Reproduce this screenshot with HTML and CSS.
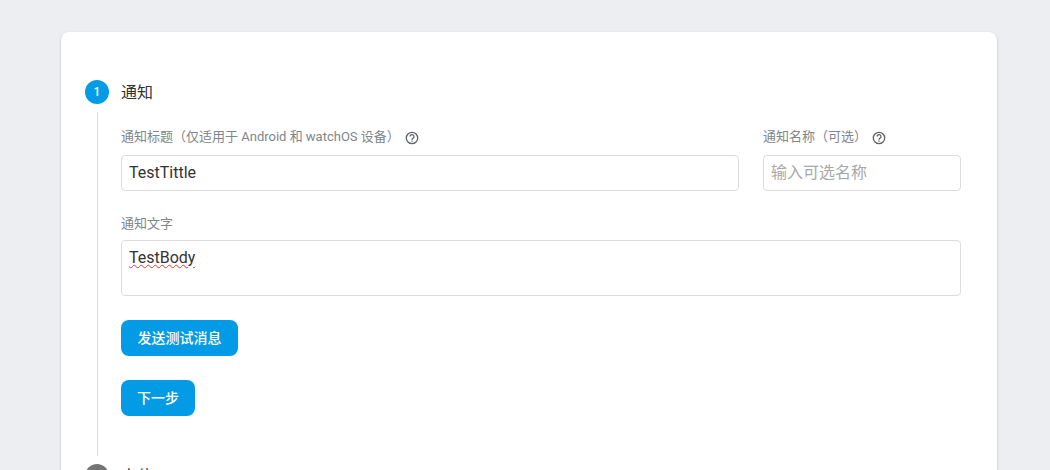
FILE: index.html
```html
<!DOCTYPE html>
<html lang="zh-CN">
<head>
<meta charset="utf-8">
<title>通知</title>
<link rel="stylesheet" href="styles.css">
</head>
<body>
<main class="card">
  <section class="step">
    <header class="step-head">
      <span class="badge">1</span>
      <h2 class="step-title">通知</h2>
    </header>
    <div class="step-body">
      <div class="row">
        <div class="field grow">
          <label class="label"><span class="label-text">通知标题（仅适用于 Android 和 watchOS 设备）</span><svg class="help" viewBox="0 0 14 14"><circle cx="7" cy="7" r="5.7"/><path d="M5 5.6a2 2 0 1 1 3 1.7c-.7.4-1 .7-1 1.4"/><path d="M7 9.6v1.2"/></svg></label>
          <div class="input value">TestTittle</div>
        </div>
        <div class="field side">
          <label class="label"><span class="label-text">通知名称（可选）</span><svg class="help" viewBox="0 0 14 14"><circle cx="7" cy="7" r="5.7"/><path d="M5 5.6a2 2 0 1 1 3 1.7c-.7.4-1 .7-1 1.4"/><path d="M7 9.6v1.2"/></svg></label>
          <div class="input placeholder">输入可选名称</div>
        </div>
      </div>
      <div class="field body-field">
        <label class="label"><span class="label-text">通知文字</span></label>
        <div class="input textarea value"><span class="misspelled">TestBody</span></div>
      </div>
      <button class="btn test-btn">发送测试消息</button>
      <button class="btn next-btn">下一步</button>
    </div>
  </section>
  <section class="step">
    <header class="step-head">
      <span class="badge off">2</span>
      <h2 class="step-title">定位</h2>
    </header>
  </section>
</main>
</body>
</html>
```
FILE: styles.css
```css
html, body { margin: 0; height: 470px; overflow: hidden; }
body {
  background: #eceef1;
  font-family: Roboto, "Noto Sans CJK SC", sans-serif;
  padding: 32px 53px 0 61px;
  box-sizing: border-box;
}
.card {
  background: #fff;
  border-radius: 8px;
  box-shadow: 0 1px 2px rgba(0,0,0,.3);
  padding: 48px 36px 0 24px;
  height: 500px;
  box-sizing: border-box;
}
.step-head { display: flex; align-items: center; gap: 12px; height: 24px; }
.badge {
  width: 24px; height: 24px; border-radius: 50%;
  background: #039be5; color: #fff;
  font-size: 12px; font-weight: 500;
  display: flex; align-items: center; justify-content: center;
}
.badge.off { background: #757575; }
.step-title { margin: -2px 0 0; font-size: 16px; font-weight: 400; color: #333; }
.step-body {
  margin: 8px 0 8px 12px;
  border-left: 1px solid #dadce0;
  padding: 15px 0 40px 23px;
}
.row { display: flex; gap: 24px; }
.grow { flex: 1; }
.side { width: 198px; }
.label {
  display: flex; align-items: center; gap: 5px;
  height: 20px; margin-bottom: 8px;
  font-size: 13px; color: #80868b;
}
.label-text { margin-top: -3px; }
.help { width: 14px; height: 14px; margin-top: 1px; fill: none; stroke: #5f6368; stroke-width: 1.3; }
.input {
  border: 1px solid #dadce0; border-radius: 4px;
  height: 36px; box-sizing: border-box;
  padding: 0 7px;
  font-size: 16px; line-height: 34px;
}
.value { color: #333; }
.placeholder { color: #a8a8a8; }
.body-field { margin-top: 23px; }
.body-field .label { margin-bottom: 6px; }
.textarea { height: 56px; line-height: 1.2; padding-top: 7px; }
.misspelled { text-decoration: underline wavy #e53935 1px; text-underline-offset: 1px; }
.btn {
  display: block; height: 36px; border: 0; border-radius: 8px;
  background: #039be5; color: #fff;
  font-family: inherit; font-size: 14px; font-weight: 500;
  padding: 0 16px 3px;
}
.test-btn { margin-top: 24px; min-width: 117px; }
.next-btn { margin-top: 24px; }
```
